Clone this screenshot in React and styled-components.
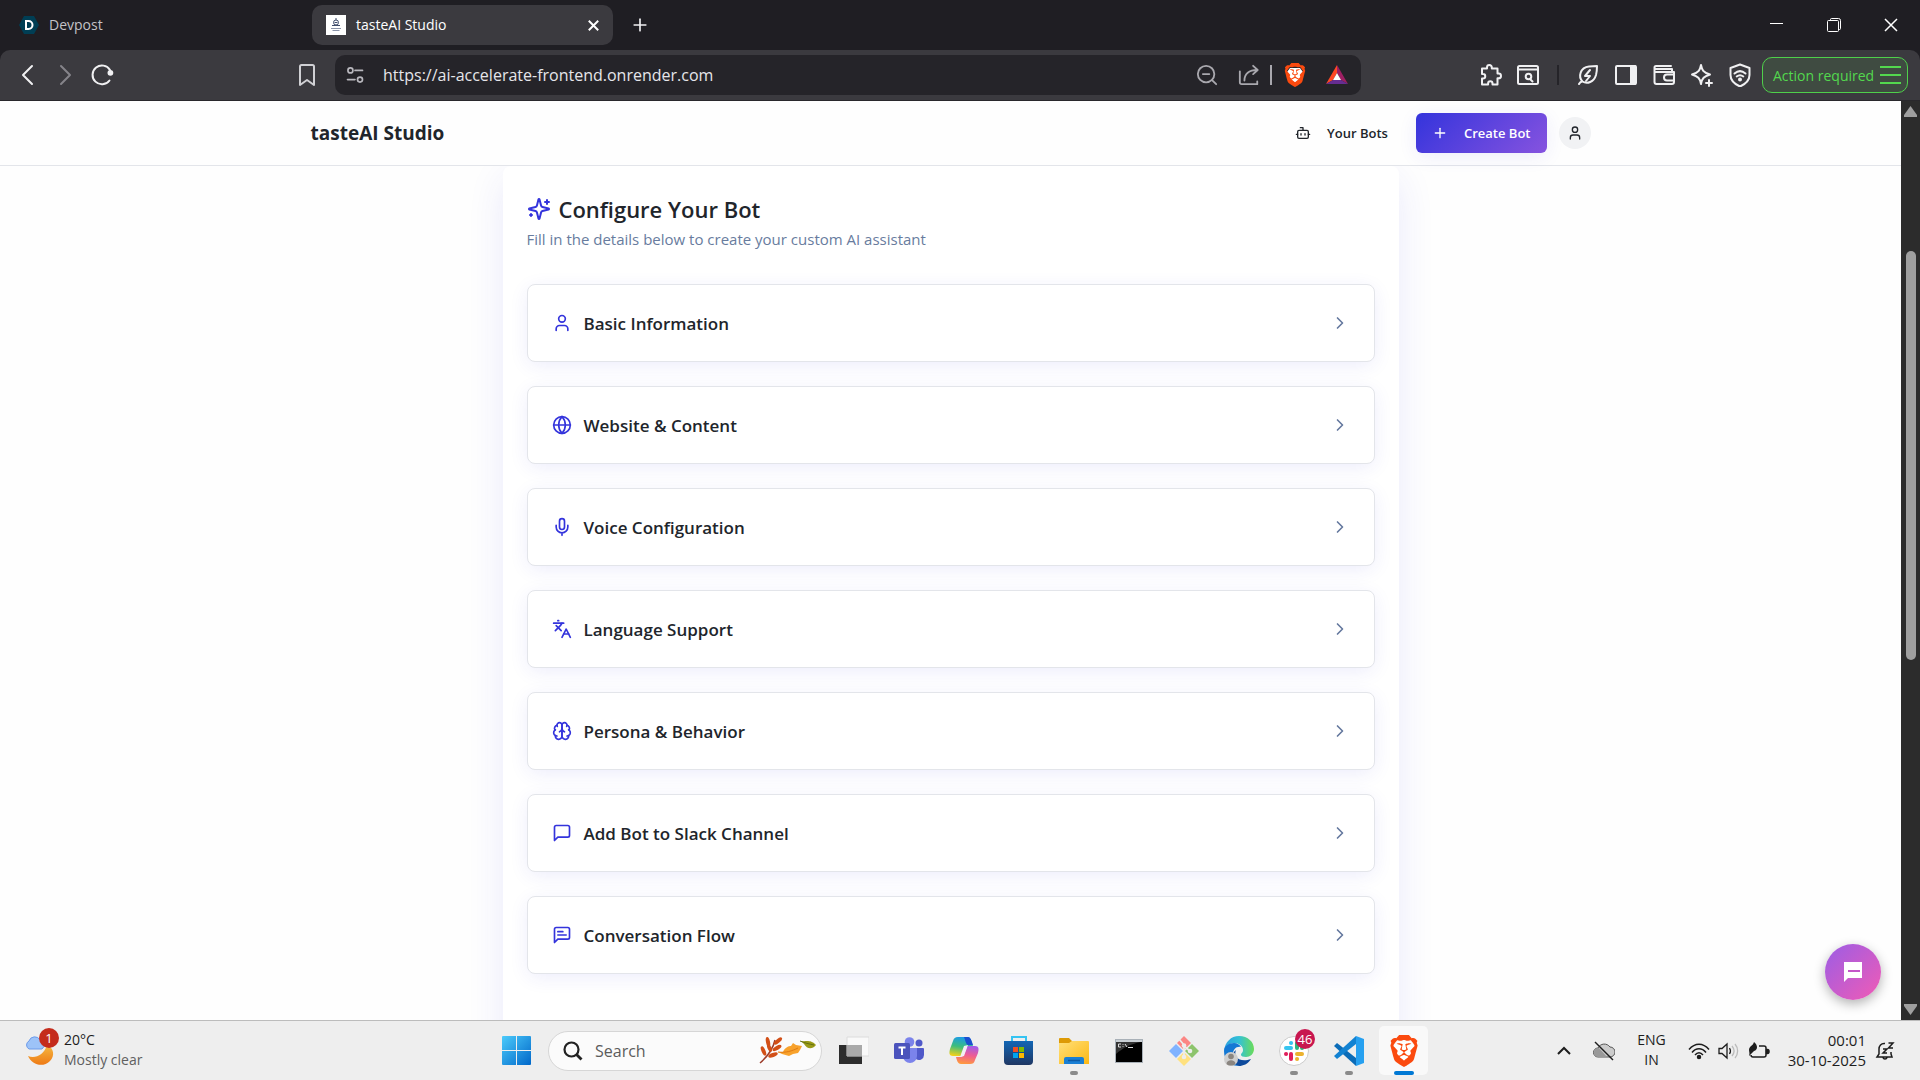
import styled, { createGlobalStyle, css } from 'styled-components';
import React, { useState } from 'react';
import {
  Bot, ChevronRight, Globe, Languages, Plus, User,
} from 'lucide-react';
import { SiBrave } from 'react-icons/si';

const GlobalStyle = createGlobalStyle`
  * {
    box-sizing: border-box;
  }

  body {
    margin: 0;
    font-family: 'Open Sans', 'Noto Sans', sans-serif;
  }

  h1, h2, h3, p {
    margin: 0;
  }

  button, input {
    font-family: inherit;
  }

  svg {
    display: block;
    flex: none;
  }
`;

/* ---------- icons ---------- */

function Line({ size = 24, width = 2, children }) {
  return (
    <svg
      width={size}
      height={size}
      viewBox="0 0 24 24"
      fill="none"
      stroke="currentColor"
      strokeWidth={width}
      strokeLinecap="round"
      strokeLinejoin="round"
    >
      {children}
    </svg>
  );
}

const SparklesIcon = () => (
  <Line>
    <path d="M9.937 15.5A2 2 0 0 0 8.5 14.063l-6.135-1.582a.5.5 0 0 1 0-.962L8.5 9.936A2 2 0 0 0 9.937 8.5l1.582-6.135a.5.5 0 0 1 .963 0L14.063 8.5A2 2 0 0 0 15.5 9.937l6.135 1.581a.5.5 0 0 1 0 .964L15.5 14.063a2 2 0 0 0-1.437 1.437l-1.582 6.135a.5.5 0 0 1-.963 0z" />
    <path d="M20 3v4M22 5h-4M4 17v2M5 18H3" />
  </Line>
);

const MicIcon = () => (
  <Line size={20}>
    <path d="M12 2a3 3 0 0 0-3 3v7a3 3 0 0 0 6 0V5a3 3 0 0 0-3-3Z" />
    <path d="M19 10v2a7 7 0 0 1-14 0v-2M12 19v3" />
  </Line>
);

const BrainIcon = () => (
  <Line size={20}>
    <path d="M12 5a3 3 0 1 0-5.997.125 4 4 0 0 0-2.526 5.77 4 4 0 0 0 .556 6.588A4 4 0 1 0 12 18Z" />
    <path d="M12 5a3 3 0 1 1 5.997.125 4 4 0 0 1 2.526 5.77 4 4 0 0 1-.556 6.588A4 4 0 1 1 12 18Z" />
    <path d="M15 13a4.5 4.5 0 0 1-3-4 4.5 4.5 0 0 1-3 4" />
    <path d="M17.599 6.5a3 3 0 0 0 .399-1.375M6.003 5.125A3 3 0 0 0 6.401 6.5M3.477 10.896a4 4 0 0 1 .585-.396M19.938 10.5a4 4 0 0 1 .585.396M6 18a4 4 0 0 1-1.967-.516M19.967 17.484A4 4 0 0 1 18 18" />
  </Line>
);

const MessageIcon = ({ lines }) => (
  <Line size={20}>
    <path d="M21 15a2 2 0 0 1-2 2H7l-4 4V5a2 2 0 0 1 2-2h14a2 2 0 0 1 2 2z" />
    {lines && <path d="M13 8H7M17 12H7" />}
  </Line>
);

const BackIcon = () => (
  <Line width={2}><path d="M16 3 7 12l9 9" /></Line>
);

const ForwardIcon = () => (
  <Line width={2}><path d="m8 3 9 9-9 9" /></Line>
);

const ReloadIcon = () => (
  <Line width={2}>
    <path d="M19.5 17.5A9.4 9.4 0 1 1 20 7" />
    <circle cx="20.4" cy="9.8" r="1.9" fill="currentColor" />
  </Line>
);

const BookmarkIcon = () => (
  <Line width={2}><path d="M5 3.500a1.500 1.500 0 0 1 1.500-1.500h11A1.500 1.500 0 0 1 19 3.500V22l-7-5-7 5z" /></Line>
);

const SiteSettingsIcon = () => (
  <Line size={20} width={2}>
    <circle cx="6.500" cy="6.500" r="3" />
    <path d="M12 6.500h9M3 17.500h9" />
    <circle cx="18" cy="17.500" r="3" />
  </Line>
);

const ZoomOutIcon = () => (
  <Line size={22} width={2}>
    <circle cx="11" cy="11" r="9" />
    <path d="M7.500 11h7M17.500 17.500 22 22" />
  </Line>
);

const ShareIcon = () => (
  <Line size={22} width={2}>
    <path d="M2 8v12a2 2 0 0 0 2 2h17v-3" />
    <path d="M7 18C7 11 12 6.500 21 6.500M16.500 2l5 4.500-5 4.500" />
  </Line>
);

const LionIcon = ({ size }) => (
  <svg width={size} height={size} viewBox="0 0 24 24">
    <path d="M7 5h10l3 4-3 9-5 4-5-4-3-9z" fill="#fff" />
    <SiBrave size={24} color="#fb4a0f" />
  </svg>
);

const RewardsIcon = () => (
  <svg width="24" height="22" viewBox="0 0 24 22">
    <path d="M12 1 1 20l7-4 4-7z" fill="#ff4724" />
    <path d="m12 1 11 19-7-4-4-7z" fill="#9e1f63" />
    <path d="M1 20h22l-7-4H8z" fill="#662d91" />
    <path d="m12 9 4 7H8z" fill="#fff" />
  </svg>
);

const PuzzleIcon = () => (
  <Line width={2}>
    <path d="M3 5.500h5V4.400a2.400 2.400 0 0 1 4.800 0v1.100h5.700v5h1.100a2.400 2.400 0 0 1 0 4.800h-1.100V21.500h-5v-1a2.200 2.200 0 0 0-4.400 0v1H3v-6h1a2.200 2.200 0 0 0 0-4.500H3z" />
  </Line>
);

const PageSearchIcon = () => (
  <Line width={2}>
    <rect x="2" y="3" width="20" height="18" rx="1.500" />
    <path d="M2 6.500h20M14.500 16.500l2 2" />
    <circle cx="12.500" cy="13.500" r="2.800" />
  </Line>
);

const LeafIcon = () => (
  <Line width={2}>
    <path d="M3 21c1-2 2-2.500 3.500-2.500C2 14 4 4.500 13 3.500c4-.400 8-.500 8-.500s0 5-1 9c-2 7-9 9.500-13.500 6.500" />
    <path d="m14 7-5 6h5l-4 5" />
  </Line>
);

const SidePanelIcon = () => (
  <Line width={2}>
    <rect x="2" y="3" width="20" height="18" rx="1" />
    <path d="M17 3h4v18h-4z" fill="currentColor" />
  </Line>
);

const WalletIcon = () => (
  <Line width={2}>
    <path d="M20 9V6H4a1.500 1.500 0 0 1 0-3h15M2.500 4.500V19a2 2 0 0 0 2 2H20a2 2 0 0 0 2-2V9H4" />
    <path d="M22 11.500h-7a3 3 0 0 0 0 6h7" />
  </Line>
);

const SparkIcon = () => (
  <Line width={2}>
    <path d="M11 2c1 5 2 7.500 9 9.500-6 2-8 3.500-9 9.500-1-6-3-7.500-9-9.500C9 9.500 10 7 11 2z" />
    <path d="M19 17v6M16 20h6" />
  </Line>
);

const ShieldIcon = () => (
  <Line width={2}>
    <path d="M12 1.500 21.500 5v7c0 5-4 9-9.500 11.500C6.500 21 2.500 17 2.500 12V5z" />
    <path d="M6.500 10.500c3.500-3 7.500-3 11 0M8.700 13.500c2-1.600 4.600-1.600 6.600 0" />
    <circle cx="12" cy="16.500" r="1" fill="currentColor" />
  </Line>
);

const MenuIcon = () => (
  <svg width="22" height="18" viewBox="0 0 22 18" stroke="currentColor" strokeWidth="2">
    <path d="M0 1h21M0 9h21M0 17h21" />
  </svg>
);

const DevpostIcon = () => (
  <svg width="20" height="20" viewBox="0 0 20 20">
    <path d="M5 1h10l5 9-5 9H5l-5-9z" fill="#003e54" />
    <path d="M7 6h2.500a4 4 0 0 1 0 8H7z" fill="none" stroke="#fff" strokeWidth="2" />
  </svg>
);

const StudioFavicon = () => (
  <svg width="20" height="20" viewBox="0 0 20 20">
    <path d="M0 0h20v20H0z" fill="#fff" />
    <g fill="none" stroke="#3f4c6b">
      <circle cx="10" cy="7.500" r="2.500" />
      <path d="M10 3v2M8.500 7.500h3M6 10.500h8" />
      <path d="M5 13.500h10M6.500 15.500h7" stroke="#8a93a8" />
    </g>
  </svg>
);

const MinimizeIcon = () => (
  <svg width="14" height="14" stroke="#fff"><path d="M0 5.500h13" /></svg>
);

const RestoreIcon = () => (
  <svg width="14" height="14" fill="none" stroke="#fff">
    <path d="M3.500 2.500v-1a1 1 0 0 1 1-1h7a2 2 0 0 1 2 2v8a1 1 0 0 1-1 1h-1" />
    <rect x="0.500" y="2.500" width="11" height="11" rx="1" />
  </svg>
);

const CloseIcon = ({ size = 14, width = 1.5 }) => (
  <svg width={size} height={size} viewBox="0 0 14 14" stroke="#fff" strokeWidth={width}>
    <path d="m1 1 12 12M13 1 1 13" />
  </svg>
);

const ChatIcon = () => (
  <svg width="18" height="20" viewBox="0 0 18 20">
    <path d="M0 0h18v16H4l-4 4z" fill="#fff" />
    <path d="M4 9h12" stroke="#c456c8" strokeWidth="2" />
  </svg>
);

const WeatherIcon = () => (
  <svg width="34" height="36" viewBox="0 0 34 36">
    <defs>
      <linearGradient id="moon" x1="0" y1="0" x2="0" y2="1">
        <stop offset="0" stopColor="#f5b942" />
        <stop offset="1" stopColor="#ee7a15" />
      </linearGradient>
    </defs>
    <path d="M22 13c7 3 8 11 3 16-7 7-18 4-22-5 7 3 16-1 19-11z" fill="url(#moon)" />
    <path d="M4 17a4.500 4.500 0 0 1 0-8 6 6 0 0 1 11-1 5 5 0 0 1 2 9z" fill="#9dc3f8" stroke="#6c9bea" />
  </svg>
);

const WindowsIcon = () => (
  <svg width="29" height="29" viewBox="0 0 29 29">
    <defs>
      <linearGradient id="win" x1="0" y1="0" x2="1" y2="1">
        <stop offset="0" stopColor="#4ccbfb" />
        <stop offset="1" stopColor="#0067c9" />
      </linearGradient>
    </defs>
    <path d="M1 0h13v14H0V1a1 1 0 0 1 1-1zM15 0h13a1 1 0 0 1 1 1v13H15zM0 15h14v14H1a1 1 0 0 1-1-1zM15 15h14v13a1 1 0 0 1-1 1H15z" fill="url(#win)" />
  </svg>
);

const SearchIcon = () => (
  <svg width="20" height="20" viewBox="0 0 20 20" fill="none" stroke="#222" strokeWidth="2.200">
    <circle cx="8.500" cy="8.500" r="7" />
    <path d="m13.500 13.500 5 5" strokeWidth="2.800" />
  </svg>
);

const LeavesIcon = () => (
  <svg width="58" height="28" viewBox="0 0 58 28">
    <path d="M1 26C8 20 14 12 16 3" stroke="#9c3b2a" fill="none" strokeWidth="1.500" />
    <g fill="#d24f17">
      <ellipse cx="9" cy="5" rx="2" ry="5" transform="rotate(-12 9 5)" />
      <ellipse cx="19" cy="4" rx="2" ry="5" transform="rotate(50 19 4)" />
      <ellipse cx="4.500" cy="14" rx="2" ry="5" transform="rotate(-24 4.500 14)" />
      <ellipse cx="10.500" cy="11" rx="2" ry="4" transform="rotate(-24 10.500 11)" />
      <ellipse cx="18" cy="11" rx="2" ry="5" transform="rotate(60 18 11)" />
      <ellipse cx="14" cy="18" rx="2" ry="5" transform="rotate(70 14 18)" />
    </g>
    <path d="M19 15h5c2-5 6-6 8-6l2-3 3 2 6 1-2 4-2 3-5 1-4 2-7-2z" fill="#f8a22c" />
    <path d="M19 15c8 1 14-1 20-4" stroke="#e07a12" fill="none" />
    <path d="M42 4c5 1 9-2 15 4-4 5-9 4-12-1z" fill="#9a9a18" />
    <path d="M41 4c5 2 9 3 14 4" stroke="#63700f" fill="none" />
  </svg>
);

const TaskViewIcon = () => (
  <svg width="30" height="30" viewBox="0 0 30 30">
    <path d="M0 9h23v19H0z" fill="#2c2c2c" />
    <path d="M8 1h22v19H8z" fill="#f9f9f9" stroke="#dcdcdc" />
    <path d="M8 9h15v11H8z" fill="#a9a9a9" />
  </svg>
);

const TeamsIcon = () => (
  <svg width="30" height="28" viewBox="0 0 30 28">
    <circle cx="25" cy="6" r="3.500" fill="#5059c9" />
    <path d="M22 11h7a1 1 0 0 1 1 1v6a5 5 0 0 1-8 4z" fill="#5059c9" />
    <circle cx="15.500" cy="5" r="4.800" fill="#7b83eb" />
    <path d="M9 11h14v8a7 7 0 0 1-14 0z" fill="#7b83eb" />
    <rect y="6" width="16" height="16" rx="1.500" fill="#4b53bc" />
    <path d="M4.500 10.500h7M8 10.500V18" stroke="#fff" strokeWidth="2" />
  </svg>
);

const CopilotIcon = () => (
  <svg width="30" height="28" viewBox="0 0 30 28">
    <defs>
      <linearGradient id="copilotA" x1="0.500" y1="0" x2="0.300" y2="1">
        <stop offset="0" stopColor="#1b9be8" />
        <stop offset="0.500" stopColor="#3dbd7d" />
        <stop offset="1" stopColor="#f2d11b" />
      </linearGradient>
      <linearGradient id="copilotB" x1="0.600" y1="0" x2="0.400" y2="1">
        <stop offset="0" stopColor="#a35be8" />
        <stop offset="0.500" stopColor="#ef5c92" />
        <stop offset="1" stopColor="#ff9a3d" />
      </linearGradient>
    </defs>
    <path d="M9 0h9c3 0 4 2 5 6l1 3h-4c-3 0-4 1-5 4l-2 6H4c-4 0-4-3-3-7L4 4c1-3 2-4 5-4z" fill="url(#copilotA)" />
    <path d="M15 0h4c2 0 3 2 4 5l1 3h-5c-2 0-3-6-4-8z" fill="#1a4fd0" />
    <path d="M21 27h-9c-3 0-4-3-5-7h4c3 0 4-2 5-5l2-6h8c4 0 4 3 3 7l-3 7c-1 3-2 4-5 4z" fill="url(#copilotB)" />
    <path d="m15 9 4-1-4 11-4 1z" fill="#f3eef5" />
  </svg>
);

const StoreIcon = () => (
  <svg width="30" height="30" viewBox="0 0 30 30">
    <defs>
      <linearGradient id="store" x1="0" y1="0" x2="0" y2="1">
        <stop offset="0" stopColor="#1266b5" />
        <stop offset="1" stopColor="#1f3763" />
      </linearGradient>
    </defs>
    <path d="M8 6V1h14v5" fill="none" stroke="#35c4f2" strokeWidth="2" />
    <path d="M0 5h29v20a4 4 0 0 1-4 4H4a4 4 0 0 1-4-4z" fill="url(#store)" />
    <path d="M9 11h5v5H9z" fill="#f25022" />
    <path d="M15 11h5v5h-5z" fill="#7fba00" />
    <path d="M9 17h5v5H9z" fill="#00a4ef" />
    <path d="M15 17h5v5h-5z" fill="#ffb900" />
  </svg>
);

const FolderIcon = () => (
  <svg width="30" height="28" viewBox="0 0 30 28">
    <defs>
      <linearGradient id="folder" x1="0" y1="0" x2="1" y2="1">
        <stop offset="0" stopColor="#ffe07a" />
        <stop offset="1" stopColor="#fdb813" />
      </linearGradient>
    </defs>
    <path d="M0 2a1 1 0 0 1 1-1h9l3 3h16v6H0z" fill="#dd9a05" />
    <path d="M0 6h10l3-2h16a1 1 0 0 1 1 1v22H0z" fill="url(#folder)" />
    <path d="M5 27v-5a2 2 0 0 1 2-2h16a2 2 0 0 1 2 2v5z" fill="#1a7fd4" />
    <path d="M9 23.500h12" stroke="#0d5aa4" strokeWidth="1.500" />
  </svg>
);

const TerminalIcon = () => (
  <svg width="28" height="24" viewBox="0 0 28 24">
    <rect x="0.500" y="0.500" width="27" height="23" fill="#000" stroke="#a9b1b8" />
    <path d="M1 2h26" stroke="#c9cfd4" strokeWidth="2" />
    <path d="M1 3h25C15 5 8 9 1 15z" fill="#333" />
    <path d="M6 5H3.500v3H6M8 5v.8M8 7.200V8M10 5l2 3M13 8.500h5" stroke="#ddd" fill="none" />
  </svg>
);

const GitIcon = () => (
  <svg width="30" height="30" viewBox="0 0 30 30">
    <path d="m15 0 7 7-7 7-7-7z" fill="#fb8684" />
    <path d="m7 8 7 7-7 7-7-7z" fill="#80b3ff" />
    <path d="m23 8 7 7-7 7-7-7z" fill="#8dc46c" />
    <path d="m15 16 7 7-7 7-7-7z" fill="#ffe17f" />
    <path d="m10 3 5 6v12M15 10l6 5" stroke="#ededed" strokeWidth="1.800" fill="none" />
    <g fill="#ededed">
      <circle cx="15" cy="9.500" r="2.300" />
      <circle cx="21" cy="15" r="2.300" />
      <circle cx="15" cy="21" r="2.300" />
    </g>
  </svg>
);

const EdgeIcon = () => (
  <svg width="30" height="30" viewBox="0 0 30 30">
    <defs>
      <linearGradient id="edgeTop" x1="0" y1="0.500" x2="1" y2="0.500">
        <stop offset="0" stopColor="#2a9fe0" />
        <stop offset="0.500" stopColor="#33c1d5" />
        <stop offset="1" stopColor="#6bdc58" />
      </linearGradient>
    </defs>
    <path d="M0 15C1 6 7 0 15 0c9 0 15 6 15 13 0 5-4 8-8 8-3 0-5-1-5-2 0-2 2-2 2-5 0-4-4-7-9-7-4 0-8 3-10 8z" fill="url(#edgeTop)" />
    <path d="M0 15c0-5 5-8 10-8 3 0 6 2 7 4-5-1-8 3-8 7 0 6 5 10 11 10-8 4-20 1-20-13z" fill="#1478d4" />
    <path d="M12 14c-3 7 4 13 15 9-3 5-8 7-12 7-7-2-9-12-3-16z" fill="#0e4a9c" />
    <circle cx="7" cy="23" r="7" fill="#cfcfcf" />
    <circle cx="7" cy="20.500" r="2.800" fill="#8a8580" />
    <path d="M2.500 28c0-5 9-5 9 0-2 2-7 2-9 0z" fill="#8a8580" />
  </svg>
);

const SlackIcon = () => (
  <svg width="30" height="30" viewBox="0 5 30 30">
    <circle cx="15" cy="20" r="14.500" fill="#fff" stroke="#ccc" />
    <g strokeWidth="4" strokeLinecap="round">
      <path d="M7 17h5" stroke="#36c5f0" />
      <path d="M12 12h.1" stroke="#36c5f0" />
      <path d="M18 12v5" stroke="#2eb67d" />
      <path d="M23 17h.1" stroke="#2eb67d" />
      <path d="M18 23h5" stroke="#ecb22e" />
      <path d="M18 28h.1" stroke="#ecb22e" />
      <path d="M12 23v5" stroke="#e01e5a" />
      <path d="M7 23h.1" stroke="#e01e5a" />
    </g>
  </svg>
);

const CodeIcon = () => (
  <svg width="30" height="30" viewBox="0 0 30 30">
    <path d="m0 10 3-3 19 15v8z" fill="#0b6cb8" />
    <path d="m0 20 3 3L22 8V0z" fill="#1282d2" />
    <path d="m22 0 8 3v24l-8 3z" fill="#26a0f0" />
  </svg>
);

const CaretIcon = () => (
  <svg width="16" height="10" fill="none" stroke="#1d1d1d" strokeWidth="2"><path d="m2 8 6-6 6 6" /></svg>
);

const CloudOffIcon = () => (
  <svg width="22" height="20" viewBox="0 0 22 20">
    <path d="M5 16a4.500 4.500 0 0 1 0-9 7 7 0 0 1 12-1 5 5 0 0 1 0 10z" fill="#ccc" stroke="#555" />
    <path d="M5 16a4.500 4.500 0 0 1 1-9l8 9z" fill="#999" />
    <path d="m2 1 18 18" stroke="#1d1d1d" strokeWidth="1.500" />
  </svg>
);

const WifiIcon = () => (
  <svg width="22" height="18" viewBox="0 0 22 18" fill="none" stroke="#1d1d1d" strokeWidth="1.500">
    <path d="M1 7.500c6-7 14-7 20 0M4 10.500c4-5 10-5 14 0M7 13c2.500-3 5.500-3 8 0" />
    <circle cx="11" cy="15" r="1.500" fill="#1d1d1d" />
  </svg>
);

const VolumeIcon = () => (
  <svg width="22" height="18" viewBox="0 0 22 18" fill="none" stroke="#1d1d1d" strokeWidth="1.300">
    <path d="M1 6.500h3L9 2v14l-5-4.500H1zM11.500 6c1.300 2 1.300 4 0 6" />
    <path d="M14 4c2.500 3 2.500 7 0 10M17 2c3.500 4 3.500 10 0 14" stroke="#bbb" />
  </svg>
);

const BatteryIcon = () => (
  <svg width="22" height="18" viewBox="0 0 22 18" fill="none" stroke="#1d1d1d" strokeWidth="1.500">
    <path d="M11 4h5a2 2 0 0 1 2 2v7a2 2 0 0 1-2 2H5a2 2 0 0 1-2-2" />
    <path d="M18.500 7.500h1a1.500 2 0 0 1 0 4h-1z" fill="#1d1d1d" />
    <path d="M6 0c4 3 4 8 0 9L1 14c1-3 0-4 0-6 0-4 4-4 5-8z" fill="#1d1d1d" stroke="none" />
  </svg>
);

const BellIcon = () => (
  <svg width="20" height="20" viewBox="0 0 20 20" fill="none" stroke="#1d1d1d" strokeWidth="1.500">
    <path d="M10 2.500C6 2 4 5 4 8v5l-2 3h15l-1-3v-2M8 16.500c.5 2 3.500 2 4 0" />
    <path d="M8 8h4l-4 4h4M13.500 2H18l-4.500 5H18" />
  </svg>
);

/* ---------- browser window ---------- */

const Screen = styled.div`
  display: flex;
  flex-direction: column;
  height: 100vh;
  overflow: hidden;
  background: #1f1e23;
`;

const TabStrip = styled.div`
  display: flex;
  align-items: center;
  gap: 6px;
  flex: none;
  height: 50px;
  padding: 5px 1px 5px 5px;
`;

const TabItem = styled.div`
  display: flex;
  align-items: center;
  gap: 10px;
  width: 301px;
  height: 40px;
  padding: 0 14px;
  border-radius: 10px;
  color: #c3c2c7;

  ${({ active }) => active
    && css`
      background: #3b3a3f;
      color: #fff;
    `}
`;

const TabTitle = styled.span`
  flex: 1;
  font-size: 14px;
  line-height: 20px;
`;

const PlainButton = styled.button`
  display: flex;
  align-items: center;
  justify-content: center;
  flex: none;
  width: ${({ width }) => width || 38}px;
  height: 38px;
  padding: 0;
  border: 0;
  background: none;
  color: ${({ color }) => color || '#f0f0f2'};
  cursor: pointer;
`;

const WindowControls = styled.div`
  display: flex;
  margin-left: auto;
`;

const Toolbar = styled.div`
  display: flex;
  align-items: center;
  flex: none;
  height: 51px;
  background: #3b3a3f;
  border-bottom: 1px solid #29282c;
  border-radius: 10px 10px 0 0;
`;

const NavButtons = styled.div`
  display: flex;
  flex: none;
  width: 335px;
  padding: 0 10px 0 9px;

  button:last-child {
    margin-left: auto;
  }
`;

const AddressBar = styled.div`
  display: flex;
  align-items: center;
  flex: 1;
  height: 40px;
  padding: 0 5px 0 1px;
  border-radius: 10px;
  background: #252429;
`;

const AddressInput = styled.input`
  flex: 1;
  min-width: 0;
  padding: 0 0 0 9px;
  border: 0;
  outline: 0;
  background: none;
  color: #e6e6ea;
  font-size: 16px;
  line-height: 24px;
`;

const Separator = styled.span`
  flex: none;
  width: 2px;
  height: 20px;
  margin: 0 ${({ gap }) => gap}px;
  background: ${({ color }) => color};
`;

const ToolButtons = styled.div`
  display: flex;
  align-items: center;
  flex: none;
  margin-left: 112px;
  padding-right: 12px;
`;

const ActionButton = styled.button`
  display: flex;
  align-items: center;
  justify-content: space-between;
  width: 146px;
  height: 36px;
  margin-left: 3px;
  padding: 0 5px 0 10px;
  border: 1px solid #4fd04b;
  border-radius: 10px;
  background: #3f4b41;
  color: #53d84e;
  font-size: 14px;
  white-space: nowrap;
  cursor: pointer;
`;

const Viewport = styled.div`
  display: flex;
  flex: 1;
  min-height: 0;
  background: #fefefe;
`;

const Scrollbar = styled.div`
  display: flex;
  flex-direction: column;
  align-items: center;
  flex: none;
  width: 19px;
  padding: 5px 0;
  background: #2c2c2c;
`;

const Track = styled.div`
  display: grid;
  grid-template-rows: 134fr 410fr 344fr;
  flex: 1;
`;

const Thumb = styled.div`
  grid-row: 2;
  width: 10px;
  border-radius: 5px;
  background: #9f9f9f;
`;

/* ---------- web page ---------- */

const Page = styled.div`
  position: relative;
  display: flex;
  flex-direction: column;
  flex: 1;
  overflow: hidden;
  color: #21252b;
`;

const Header = styled.header`
  flex: none;
  border-bottom: 1px solid #e3e5ea;
`;

const HeaderInner = styled.div`
  display: flex;
  align-items: center;
  gap: 12px;
  max-width: 1280px;
  height: 64px;
  margin: 0 auto;
`;

const Brand = styled.h1`
  margin-right: auto;
  font-size: 19px;
  font-weight: 700;
  line-height: 28px;
`;

const HeaderButton = styled.button`
  display: flex;
  align-items: center;
  gap: 16px;
  height: 40px;
  padding: 0 16px;
  border: 0;
  border-radius: 6px;
  background: none;
  color: #21252b;
  font-size: 13px;
  font-weight: 600;
  cursor: pointer;

  ${({ primary }) => primary
    && css`
      background: linear-gradient(135deg, #3434dc, #8653df);
      box-shadow: 0 4px 20px -2px rgba(52, 52, 220, 0.1);
      color: #fff;
    `}
`;

const Avatar = styled.button`
  display: flex;
  align-items: center;
  justify-content: center;
  width: 32px;
  height: 32px;
  padding: 0;
  border: 0;
  border-radius: 50%;
  background: #f1f2f4;
  color: #21252b;
  cursor: pointer;
`;

const Main = styled.main`
  flex: 1;
  min-height: 0;
  overflow: hidden;
`;

const Card = styled.section`
  max-width: 896px;
  margin: 0 auto;
  padding: 25px 24px 120px;
  border-radius: 8px;
  background: #fff;
  box-shadow: 0 10px 40px -4px rgba(52, 52, 220, 0.12);
`;

const CardTitle = styled.h2`
  display: flex;
  align-items: center;
  gap: 8px;
  font-size: 22px;
  font-weight: 600;
  line-height: 36px;

  svg {
    color: #3434dc;
  }
`;

const CardText = styled.p`
  color: #687c9e;
  font-size: 15px;
  line-height: 24px;
`;

const SectionList = styled.div`
  display: flex;
  flex-direction: column;
  gap: 24px;
  padding-top: 33px;
`;

const SectionButton = styled.button`
  display: flex;
  align-items: center;
  gap: 12px;
  width: 100%;
  height: 78px;
  padding: 0 24px;
  border: 1px solid #e3e5ea;
  border-radius: 8px;
  background: #fff;
  box-shadow: 0 4px 20px -2px rgba(52, 52, 220, 0.1);
  color: #21252b;
  font-size: 17px;
  font-weight: 600;
  text-align: left;
  cursor: pointer;

  svg:first-child {
    color: #3434dc;
  }

  svg:last-child {
    margin-left: auto;
    color: #64789e;
  }
`;

const ChatButton = styled.button`
  position: absolute;
  right: 20px;
  bottom: 20px;
  display: flex;
  align-items: center;
  justify-content: center;
  width: 56px;
  height: 56px;
  padding: 0;
  border: 0;
  border-radius: 50%;
  background: linear-gradient(135deg, #9b5de5, #f15bb5);
  box-shadow: 0 4px 12px rgba(0, 0, 0, 0.3);
  cursor: pointer;
`;

/* ---------- taskbar ---------- */

const Taskbar = styled.footer`
  display: grid;
  grid-template-columns: 1fr auto 1fr;
  align-items: center;
  flex: none;
  height: 60px;
  border-top: 1px solid #bcbcbc;
  background: #eee;
  color: #1d1d1d;
  font-size: 14px;
  line-height: 20px;
`;

const Weather = styled.button`
  position: relative;
  display: flex;
  align-items: center;
  gap: 5px;
  justify-self: start;
  padding: 0 0 2px 25px;
  border: 0;
  background: none;
  color: inherit;
  font-size: inherit;
  line-height: inherit;
  text-align: left;

  small {
    display: block;
    color: #606060;
    font-size: inherit;
  }
`;

const Badge = styled.span`
  position: absolute;
  top: ${({ top }) => top}px;
  left: ${({ left }) => left}px;
  width: 20px;
  height: 20px;
  border-radius: 50%;
  background: ${({ color }) => color};
  color: #fff;
  font-size: 13px;
  line-height: 20px;
  text-align: center;
`;

const AppRow = styled.div`
  display: flex;
  align-items: center;
`;

const SearchBox = styled.label`
  display: flex;
  align-items: center;
  gap: 12px;
  width: 274px;
  height: 40px;
  margin: 0 4px;
  padding: 0 4px 0 14px;
  border: 1px solid #d6d6d6;
  border-radius: 20px;
  background: #fbfbfb;

  input {
    flex: 1;
    min-width: 0;
    padding: 0;
    border: 0;
    outline: 0;
    background: none;
    font-size: 16px;
  }

  input::placeholder {
    color: #5c5c5c;
    opacity: 1;
  }
`;

const AppButton = styled.button`
  position: relative;
  display: flex;
  align-items: center;
  justify-content: center;
  width: 49px;
  height: 49px;
  margin: 0 3px;
  padding: 0;
  border: 0;
  border-radius: 5px;
  background: ${({ active }) => (active ? '#f9f9f9' : 'none')};

  ${({ running, active }) => running
    && css`
      &::after {
        content: '';
        position: absolute;
        bottom: 0;
        width: ${active ? 20 : 8}px;
        height: 4px;
        border-radius: 2px;
        background: ${active ? '#0078d4' : '#8a8a8a'};
      }
    `}
`;

const Tray = styled.div`
  display: flex;
  align-items: center;
  justify-self: end;
  padding-right: 25px;
`;

const TrayText = styled.div`
  margin: 0 ${({ right }) => right}px 0 ${({ left }) => left}px;
  padding-bottom: 2px;
  font-size: ${({ size }) => size || 14}px;
  text-align: ${({ align }) => align};
`;

const TrayIcons = styled.div`
  display: flex;
  gap: ${({ gap }) => gap}px;
  align-items: center;
`;

const sections = [
  { title: 'Basic Information', icon: <User size={20} /> },
  { title: 'Website & Content', icon: <Globe size={20} /> },
  { title: 'Voice Configuration', icon: <MicIcon /> },
  { title: 'Language Support', icon: <Languages size={20} /> },
  { title: 'Persona & Behavior', icon: <BrainIcon /> },
  { title: 'Add Bot to Slack Channel', icon: <MessageIcon /> },
  { title: 'Conversation Flow', icon: <MessageIcon lines /> },
];

const apps = [
  { name: 'Task view', icon: <TaskViewIcon /> },
  { name: 'Teams', icon: <TeamsIcon /> },
  { name: 'Copilot', icon: <CopilotIcon /> },
  { name: 'Store', icon: <StoreIcon /> },
  { name: 'Explorer', icon: <FolderIcon />, running: true },
  { name: 'Terminal', icon: <TerminalIcon /> },
  { name: 'Git', icon: <GitIcon /> },
  { name: 'Edge', icon: <EdgeIcon /> },
  { name: 'Slack', icon: <SlackIcon />, running: true, badge: 46 },
  { name: 'Code', icon: <CodeIcon />, running: true },
  { name: 'Brave', icon: <LionIcon size={32} />, running: true, active: true },
];

function BrowserBar() {
  const [url, setUrl] = useState('https://ai-accelerate-frontend.onrender.com');

  return (
    <>
      <TabStrip>
        <TabItem>
          <DevpostIcon />
          <TabTitle>Devpost</TabTitle>
        </TabItem>
        <TabItem active>
          <StudioFavicon />
          <TabTitle>tasteAI Studio</TabTitle>
          <PlainButton width={12} aria-label="Close tab"><CloseIcon size={11} width={2.5} /></PlainButton>
        </TabItem>
        <PlainButton width={42} aria-label="New tab"><Plus size={20} strokeWidth={2} /></PlainButton>
        <WindowControls>
          <PlainButton width={57} aria-label="Minimize"><MinimizeIcon /></PlainButton>
          <PlainButton width={57} aria-label="Restore"><RestoreIcon /></PlainButton>
          <PlainButton width={57} aria-label="Close"><CloseIcon /></PlainButton>
        </WindowControls>
      </TabStrip>
      <Toolbar>
        <NavButtons>
          <PlainButton width={37} aria-label="Back"><BackIcon /></PlainButton>
          <PlainButton width={37} aria-label="Forward" color="#85848a"><ForwardIcon /></PlainButton>
          <PlainButton width={37} aria-label="Reload"><ReloadIcon /></PlainButton>
          <PlainButton width={37} aria-label="Bookmark" color="#d0d0d4"><BookmarkIcon /></PlainButton>
        </NavButtons>
        <AddressBar>
          <PlainButton aria-label="Site settings" color="#b9b8be"><SiteSettingsIcon /></PlainButton>
          <AddressInput aria-label="Address" value={url} onChange={(e) => setUrl(e.target.value)} />
          <PlainButton width={42} aria-label="Zoom" color="#a9a8ae"><ZoomOutIcon /></PlainButton>
          <PlainButton width={42} aria-label="Share" color="#a9a8ae"><ShareIcon /></PlainButton>
          <Separator gap={0} color="#a9a8ae" />
          <PlainButton width={46} aria-label="Shields"><LionIcon size={24} /></PlainButton>
          <PlainButton aria-label="Rewards"><RewardsIcon /></PlainButton>
        </AddressBar>
        <ToolButtons>
          <PlainButton width={36} aria-label="Extensions"><PuzzleIcon /></PlainButton>
          <PlainButton aria-label="Search page"><PageSearchIcon /></PlainButton>
          <Separator gap={10} color="#252429" />
          <PlainButton aria-label="Energy saver"><LeafIcon /></PlainButton>
          <PlainButton aria-label="Side panel"><SidePanelIcon /></PlainButton>
          <PlainButton aria-label="Wallet"><WalletIcon /></PlainButton>
          <PlainButton aria-label="Assistant"><SparkIcon /></PlainButton>
          <PlainButton aria-label="VPN"><ShieldIcon /></PlainButton>
          <ActionButton>
            Action required
            <MenuIcon />
          </ActionButton>
        </ToolButtons>
      </Toolbar>
    </>
  );
}

function BotPage() {
  return (
    <Page>
      <Header>
        <HeaderInner>
          <Brand>tasteAI Studio</Brand>
          <HeaderButton>
            <Bot size={16} />
            Your Bots
          </HeaderButton>
          <HeaderButton primary>
            <Plus size={16} />
            Create Bot
          </HeaderButton>
          <Avatar aria-label="Account"><User size={16} /></Avatar>
        </HeaderInner>
      </Header>
      <Main>
        <Card>
          <CardTitle>
            <SparklesIcon />
            Configure Your Bot
          </CardTitle>
          <CardText>Fill in the details below to create your custom AI assistant</CardText>
          <SectionList>
            {sections.map((section) => (
              <SectionButton key={section.title} aria-expanded="false">
                {section.icon}
                {section.title}
                <ChevronRight size={20} />
              </SectionButton>
            ))}
          </SectionList>
        </Card>
      </Main>
      <ChatButton aria-label="Chat"><ChatIcon /></ChatButton>
    </Page>
  );
}

function SystemBar() {
  return (
    <Taskbar>
      <Weather>
        <WeatherIcon />
        <Badge top={-2} left={39} color="#c42b1c">1</Badge>
        <span>
          20°C
          <small>Mostly clear</small>
        </span>
      </Weather>
      <AppRow>
        <AppButton aria-label="Start"><WindowsIcon /></AppButton>
        <SearchBox>
          <SearchIcon />
          <input placeholder="Search" aria-label="Search" />
          <LeavesIcon />
        </SearchBox>
        {apps.map((app) => (
          <AppButton key={app.name} aria-label={app.name} running={app.running} active={app.active}>
            {app.icon}
            {app.badge && <Badge top={3} left={26} color="#c8174f">{app.badge}</Badge>}
          </AppButton>
        ))}
      </AppRow>
      <Tray>
        <TrayIcons gap={21}>
          <CaretIcon />
          <CloudOffIcon />
        </TrayIcons>
        <TrayText left={22} right={22} align="center">
          <div>ENG</div>
          <div>IN</div>
        </TrayText>
        <TrayIcons gap={8}>
          <WifiIcon />
          <VolumeIcon />
          <BatteryIcon />
        </TrayIcons>
        <TrayText left={18} right={9} size={15} align="right">
          <div>00:01</div>
          <div>30-10-2025</div>
        </TrayText>
        <BellIcon />
      </Tray>
    </Taskbar>
  );
}

function App() {
  return (
    <Screen>
      <GlobalStyle />
      <BrowserBar />
      <Viewport>
        <BotPage />
        <Scrollbar>
          <svg width="13" height="11" fill="#9f9f9f"><path d="M6.500 0 13 9v2H0V9z" /></svg>
          <Track><Thumb /></Track>
          <svg width="13" height="11" fill="#9f9f9f"><path d="M6.500 11 13 2V0H0v2z" /></svg>
        </Scrollbar>
      </Viewport>
      <SystemBar />
    </Screen>
  );
}

export default App;
